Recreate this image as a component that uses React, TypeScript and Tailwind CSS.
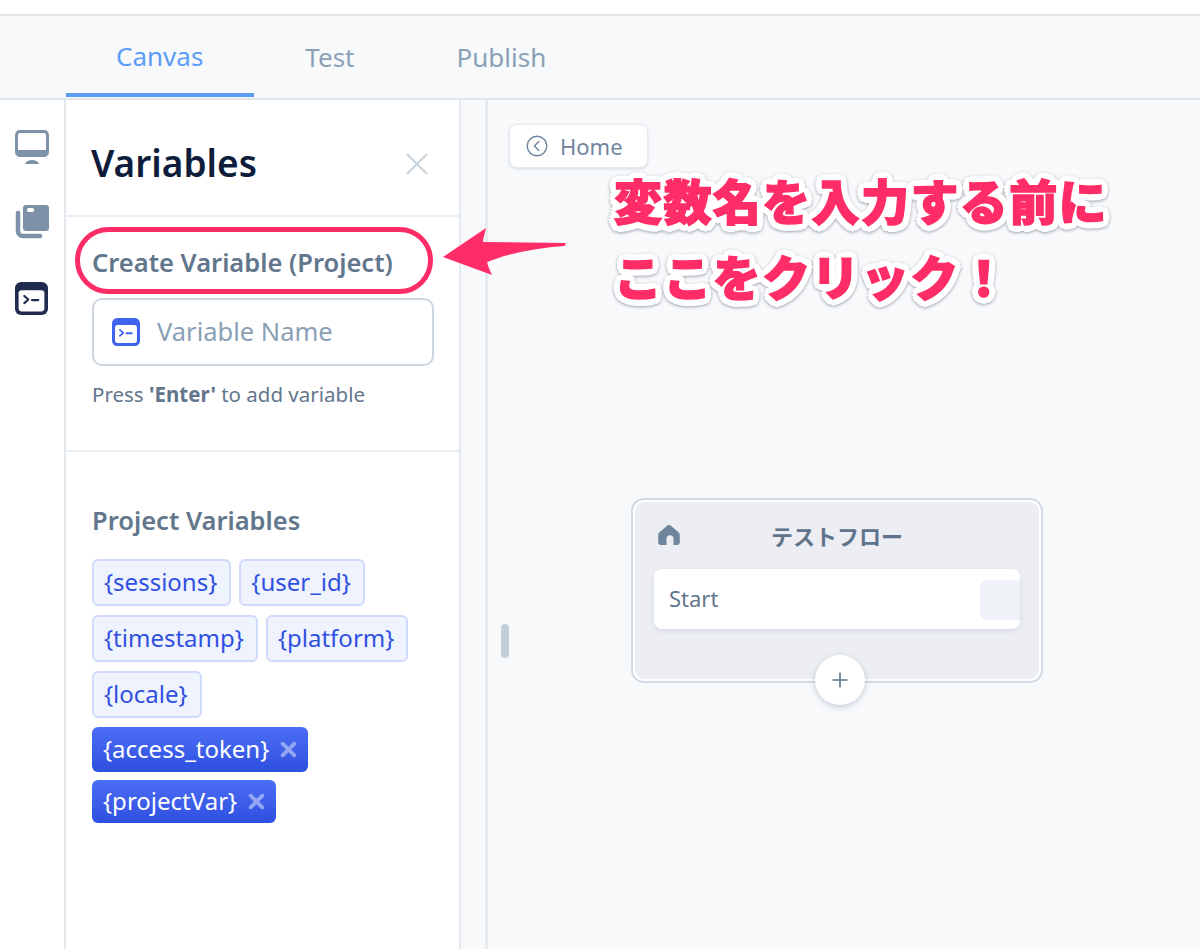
import { Plus } from "lucide-react";

const sans = "font-['Noto_Sans','Open_Sans',sans-serif]";

const plainVars = [
  ["{sessions}", "{user_id}"],
  ["{timestamp}", "{platform}"],
  ["{locale}"],
];

function TerminalIcon({ className }: { className: string }) {
  return (
    <svg viewBox="0 0 32 32" className={className}>
      <rect width="32" height="32" rx="6" fill="currentColor" />
      <rect x="3.5" y="8" width="25" height="20.5" rx="3" fill="#fff" />
      <path d="M9 13.5l4 3.5-4 3.5" fill="none" stroke="currentColor" strokeWidth="2" strokeLinecap="round" strokeLinejoin="round" />
      <path d="M16.5 17.5h6" stroke="currentColor" strokeWidth="2.2" strokeLinecap="round" />
    </svg>
  );
}

function Rail() {
  return (
    <div className="w-[66px] shrink-0 border-r-2 border-[#e3e9ef] bg-white flex flex-col items-start pl-[15px] pt-[30px]">
      <svg viewBox="0 0 34 36" className="w-[34px] h-[36px] text-[#7d92a9]">
        <rect x="1.5" y="1.5" width="31" height="24" rx="3.5" fill="none" stroke="currentColor" strokeWidth="3" />
        <path d="M1.5 20h31v3a4 4 0 0 1-4 4h-23a4 4 0 0 1-4-4z" fill="currentColor" />
        <path d="M10 34c1-3 4-4 7-4s6 1 7 4z" fill="currentColor" />
      </svg>
      <svg viewBox="0 0 34 34" className="w-[34px] h-[34px] mt-[39px] text-[#7d92a9]">
        <rect x="8" y="0" width="26" height="26" rx="3" fill="currentColor" />
        <rect x="12" y="3" width="7" height="4" rx="1.5" fill="#fff" />
        <path d="M3 8v18a5 5 0 0 0 5 5h17" fill="none" stroke="currentColor" strokeWidth="4.5" strokeLinecap="round" />
      </svg>
      <TerminalIcon className="w-[33px] h-[33px] mt-[43px] text-[#1f2c50]" />
    </div>
  );
}

function Chip({ label }: { label: string }) {
  return (
    <span className="h-[47px] pl-[10px] pr-[12px] pb-[1px] flex items-center rounded-[6px] border-2 border-[#d0dafb] bg-[#eff3fe] text-[#2f50e0] text-[24px] leading-none whitespace-nowrap">
      {label}
    </span>
  );
}

function ActiveChip({ label, h }: { label: string; h: string }) {
  return (
    <span className={`${h} pl-[11px] pr-[11px] pb-[1px] flex items-center gap-[11px] rounded-[6px] bg-gradient-to-b from-[#4c6ef5] to-[#2f4fdf] text-white text-[24px] leading-none whitespace-nowrap w-fit`}>
      {label}
      <svg viewBox="0 0 16 16" className="w-[17px] h-[17px] text-[#93a6f5]">
        <path d="M2.5 2.500l11 11M13.500 2.500l-11 11" stroke="currentColor" strokeWidth="3.6" strokeLinecap="round" />
      </svg>
    </span>
  );
}

function VariablesPanel() {
  return (
    <div className="w-[393px] shrink-0 bg-white flex flex-col">
      <div className="h-[117px] pt-[13px] border-b-2 border-[#e9eef3] flex items-center justify-between pl-[25px] pr-[31px]">
        <h1 className="text-[37px] leading-none font-semibold text-[#0f1d3c] pb-[3px]">Variables</h1>
        <svg viewBox="0 0 22 22" className="w-[22px] h-[22px] text-[#c6d3e0]">
          <path d="M1 1l20 20M21 1L1 21" stroke="currentColor" strokeWidth="2" />
        </svg>
      </div>

      <div className="h-[235px] border-b-2 border-[#e9eef3] pl-[26px] pr-[25px]">
        <h2 className="mt-[28px] text-[25.5px] leading-[34px] font-semibold text-[#62768c] whitespace-nowrap">
          Create Variable (Project)
        </h2>
        <div className="mt-[19px] h-[68px] rounded-[10px] border-2 border-[#cdd6e0] flex items-center pl-[18px] gap-[17px]">
          <TerminalIcon className="w-[28px] h-[28px] text-[#3f63ec]" />
          <span className="text-[25.5px] leading-none text-[#8a9fb5]">Variable Name</span>
        </div>
        <p className="mt-[14px] text-[20.5px] leading-[28px] text-[#62768c] whitespace-nowrap">
          Press <b className="font-bold">'Enter'</b> to add variable
        </p>
      </div>

      <div className="pl-[26px] pt-[51px]">
        <h2 className="text-[25.5px] leading-[34px] font-semibold text-[#62768c]">Project Variables</h2>
        <div className="mt-[22px] flex flex-col">
          {plainVars.map((row) => (
            <div key={row[0]} className="flex gap-[8px] mb-[9px]">
              {row.map((v) => (
                <Chip key={v} label={v} />
              ))}
            </div>
          ))}
          <ActiveChip label="{access_token}" h="h-[45px]" />
          <div className="h-[8px]" />
          <ActiveChip label="{projectVar}" h="h-[43px]" />
        </div>
      </div>
    </div>
  );
}

function Canvas() {
  return (
    <div className="flex-1 relative bg-[#f7f9fb]">
      <div className="absolute left-[21px] top-[24px] w-[139px] h-[44px] bg-white rounded-[8px] border border-[#e6ebf0] shadow-[0_1px_3px_rgba(120,140,165,0.25)] flex items-center pl-[16px] gap-[12px]">
        <svg viewBox="0 0 22 22" className="w-[22px] h-[22px] text-[#71869c]">
          <circle cx="11" cy="11" r="9.8" fill="none" stroke="currentColor" strokeWidth="1.4" />
          <path d="M12.8 6.5L8.4 11l4.4 4.5" fill="none" stroke="currentColor" strokeWidth="1.5" strokeLinecap="round" strokeLinejoin="round" />
        </svg>
        <span className="text-[22px] leading-none text-[#71869c]">Home</span>
      </div>

      <div className="absolute left-[143px] top-[398px] w-[412px] h-[185px] rounded-[13px] border-2 border-[#d3dbe6] bg-[#eceef3] shadow-[inset_0_0_0_2px_#fff]">
        <svg viewBox="0 0 22 20" className="absolute left-[25px] top-[25px] w-[22px] h-[20px] text-[#6f859c]">
          <path d="M11 0c.6 0 1.100.2 1.600.6l7.600 6.300c1 .9 1.600 2 1.600 3.300V17a3 3 0 0 1-3 3h-3.300v-6.300a3.500 3.500 0 0 0-7 0V20H3.200a3 3 0 0 1-3-3v-6.800c0-1.300.6-2.400 1.600-3.300L9.400.6C9.900.2 10.400 0 11 0z" fill="currentColor" />
        </svg>
        <div className="pt-[20px] text-center text-[22px] leading-[30px] font-bold text-[#5f738a] font-['Noto_Sans_CJK_JP',sans-serif]">
          テストフロー
        </div>
        <div className="absolute left-[21px] top-[69px] w-[366px] h-[60px] bg-white rounded-[8px] shadow-[0_2px_5px_rgba(120,140,165,0.2)] flex items-center pl-[15px] pb-[3px] overflow-hidden">
          <span className="text-[22px] leading-none text-[#62768c]">Start</span>
          <div className="absolute right-0 top-[11px] w-[40px] h-[40px] rounded-l-[8px] bg-[#eff2f6]" />
        </div>
        <div className="absolute left-[182px] top-[155px] w-[50px] h-[50px] rounded-full bg-white shadow-[0_2px_6px_rgba(120,140,165,0.4)] flex items-center justify-center">
          <Plus className="w-[24px] h-[24px] text-[#62768c]" strokeWidth={1.6} />
        </div>
      </div>
    </div>
  );
}

export default function App() {
  return (
    <div className={`${sans} relative h-[949px] w-[1200px] overflow-hidden bg-white flex flex-col`}>
      <div className="h-[16px] shrink-0 bg-white border-b-2 border-[#dfe6eb]" />

      <div className="h-[84px] shrink-0 bg-[#f7f9fb] border-b-2 border-[#dfe6ec] flex pl-[66px] text-[26px]">
        <div className="h-[81px] pl-[50px] pr-[51px] pt-[3px] flex items-center border-b-4 border-[#5b9cf5] text-[#5b9cf5]">Canvas</div>
        <div className="h-[82px] px-[51px] flex items-center text-[#8ba1b7]">Test</div>
        <div className="h-[82px] px-[51px] flex items-center text-[#8ba1b7]">Publish</div>
      </div>

      <div className="flex-1 flex min-h-0">
        <Rail />
        <VariablesPanel />
        <div className="w-[29px] shrink-0 bg-[#f7f9fb] border-l-2 border-[#e3e9ef] relative z-10">
          <div className="absolute right-0 top-0 bottom-0 w-[3px] bg-[#e6ebf0]" />
          <div className="absolute left-[40px] top-[524px] w-[8px] h-[34px] rounded-[4px] bg-[#c3ced9]" />
        </div>
        <Canvas />
      </div>

      {/* annotation layer */}
      <div className="absolute z-20 left-[75px] top-[227px] w-[358px] h-[67px] rounded-[34px] border-[5px] border-[#ff2d67]" />
      <svg viewBox="0 0 130 50" className="absolute z-20 left-[442px] top-[226px] w-[130px] h-[50px]">
        <path d="M1 31L44 2c-1 5-3 10-3 14l82 1c1 0 1 3-1 3-26 2-52 6-77 16 1 4 3 9 5 13z" fill="#ff2d67" />
      </svg>
      <div className="absolute z-20 left-[614px] top-[161px] font-['Noto_Sans_CJK_JP',sans-serif] font-black text-[48px] leading-[76px] tracking-[1.4px] text-[#ff2d67] [-webkit-text-stroke:1.5px_#ff2d67] [text-shadow:7px_0_#fff,-7px_0_#fff,0_7px_#fff,0_-7px_#fff,6px_3px_#fff,-6px_3px_#fff,6px_-3px_#fff,-6px_-3px_#fff,3px_6px_#fff,-3px_6px_#fff,3px_-6px_#fff,-3px_-6px_#fff,5px_5px_#fff,-5px_5px_#fff,5px_-5px_#fff,-5px_-5px_#fff,4px_0_#fff,-4px_0_#fff,0_4px_#fff,0_-4px_#fff,3px_3px_#fff,-3px_3px_#fff,3px_-3px_#fff,-3px_-3px_#fff] drop-shadow-[0_1px_1.5px_rgba(80,90,110,0.55)] whitespace-nowrap">
        <div>変数名を入力する前に</div>
        <div>ここをクリック！</div>
      </div>
    </div>
  );
}
